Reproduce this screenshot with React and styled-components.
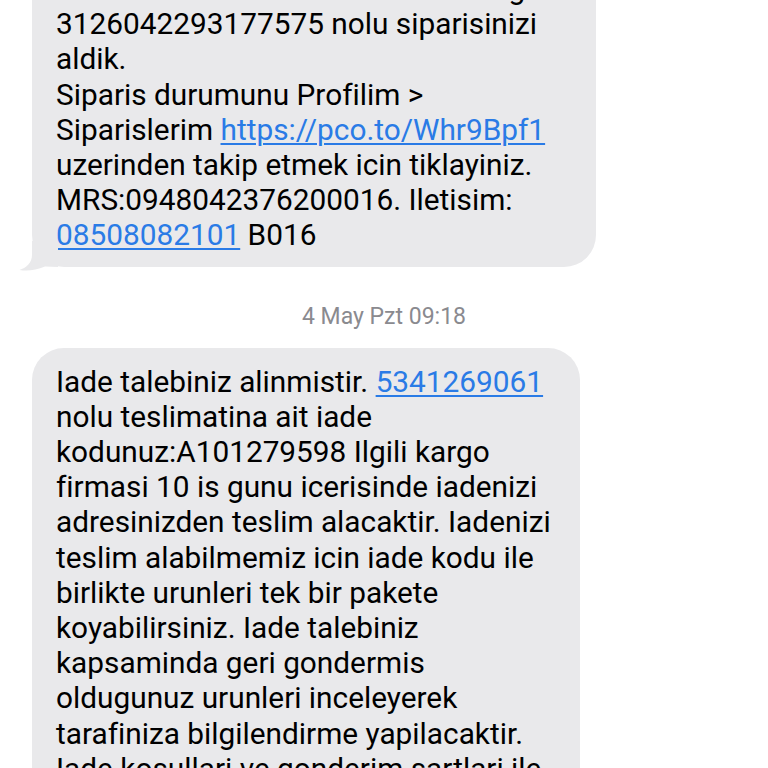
import React from "react";
import styled, { createGlobalStyle } from "styled-components";

const GlobalStyle = createGlobalStyle`
  html, body {
    margin: 0;
    padding: 0;
    background: #ffffff;
  }
  body {
    font-family: "Roboto", "Liberation Sans", sans-serif;
    font-variant-ligatures: none;
    font-feature-settings: "liga" 0, "clig" 0;
    -webkit-font-smoothing: antialiased;
  }
`;

const Page = styled.div`
  width: 768px;
  height: 768px;
  overflow: hidden;
  background: #ffffff;
`;

const Thread = styled.div`
  display: flex;
  flex-direction: column;
  align-items: flex-start;
  margin-top: -45px;
  padding-left: 32px;
`;

const Bubble = styled.div`
  position: relative;
  box-sizing: border-box;
  width: ${(p) => p.$width}px;
  padding: 16px 24px ${(p) => p.$padBottom ?? 16}px;
  background: #e9e9eb;
  border-radius: 32px;
  color: #000000;
  font-size: 29.8px;
  line-height: 35.2px;
  white-space: nowrap;
`;

const Line = styled.div`
  display: block;
`;

const Link = styled.a`
  color: #2a7be6;
  text-decoration: underline;
  text-decoration-thickness: 1.5px;
  text-underline-offset: 3px;
`;

const Tail = styled.svg`
  position: absolute;
  left: -14px;
  bottom: -4px;
  width: 40px;
  height: 30px;
  overflow: visible;
`;

const Timestamp = styled.div`
  align-self: stretch;
  margin: 36px 32px 18px 0;
  text-align: center;
  font-size: 23px;
  line-height: 27px;
  font-weight: 400;
  color: #8a8a8f;
`;

function BubbleTail() {
  return (
    <Tail viewBox="0 0 40 30" aria-hidden="true">
      <path
        d="M14 0 L14 14 C14 22 8 27 1.5 29 C10 30.5 18 29 27 25.5 L40 26 L40 0 Z"
        fill="#e9e9eb"
      />
    </Tail>
  );
}

export default function App() {
  return (
    <>
      <GlobalStyle />
      <Page>
        <Thread>
          <Bubble $width={564} $padBottom={14}>
            <Line>Merhaba 3.05.2020 tarihinde verdiginiz</Line>
            <Line>3126042293177575 nolu siparisinizi</Line>
            <Line>aldik.</Line>
            <Line>Siparis durumunu Profilim &gt;</Line>
            <Line>
              Siparislerim <Link href="#">https://pco.to/Whr9Bpf1</Link>
            </Line>
            <Line>uzerinden takip etmek icin tiklayiniz.</Line>
            <Line>MRS:0948042376200016. Iletisim:</Line>
            <Line>
              <Link href="#">08508082101</Link> B016
            </Line>
            <BubbleTail />
          </Bubble>

          <Timestamp>4 May Pzt 09:18</Timestamp>

          <Bubble $width={548}>
            <Line>
              Iade talebiniz alinmistir. <Link href="#">5341269061</Link>
            </Line>
            <Line>nolu teslimatina ait iade</Line>
            <Line>kodunuz:A101279598 Ilgili kargo</Line>
            <Line>firmasi 10 is gunu icerisinde iadenizi</Line>
            <Line>adresinizden teslim alacaktir. Iadenizi</Line>
            <Line>teslim alabilmemiz icin iade kodu ile</Line>
            <Line>birlikte urunleri tek bir pakete</Line>
            <Line>koyabilirsiniz. Iade talebiniz</Line>
            <Line>kapsaminda geri gondermis</Line>
            <Line>oldugunuz urunleri inceleyerek</Line>
            <Line>tarafiniza bilgilendirme yapilacaktir.</Line>
            <Line>Iade kosullari ve gonderim sartlari ile</Line>
            <Line>ilgili detayli bilgiye ulasabilirsiniz.</Line>
          </Bubble>
        </Thread>
      </Page>
    </>
  );
}
